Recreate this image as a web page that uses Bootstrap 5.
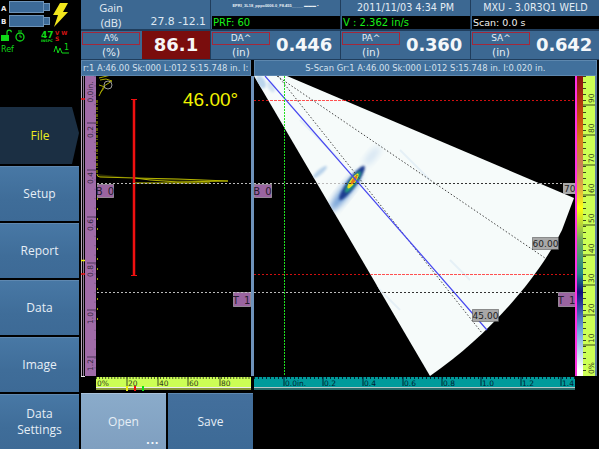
<!DOCTYPE html>
<html lang="en">
<head>
<meta charset="utf-8">
<title>Scan</title>
<link href="https://cdn.jsdelivr.net/npm/bootstrap@5.3.0/dist/css/bootstrap.min.css" rel="stylesheet">
<style>
html,body{width:599px;height:449px;margin:0;overflow:hidden;background:#000;color:#dfe8f2;font-family:"DejaVu Sans",sans-serif}
.shell{width:599px;height:449px}
.side{width:80px;flex:0 0 80px}
.status{height:107px;flex:0 0 107px}
.menu-btn{height:55px;flex:0 0 55px;margin-bottom:2px;background:linear-gradient(#4878a5,#3f6d99 60%,#3d6a96);border-top:1px solid #5f88b0;color:#e6eef6;font:12px/16px "Open Sans",sans-serif;margin-right:1px}
.menu-btn.on{height:57px;flex:0 0 57px;background:#1b2f43;color:#ecec1e;margin-right:0;border:0;clip-path:polygon(0 0,72px 0,79px 26px,72px 57px,0 57px)}
.work{width:519px}
.head{display:grid;grid-template-columns:129px 129px 129px 129px;column-gap:1px;row-gap:2px;grid-template-rows:29px 28px;background:#203d5c;margin-left:1px;height:60px;width:518px}
.cell{background:#3c6892;overflow:hidden;min-width:0}
.gain-l{width:60px;font:11px/15px "Open Sans",sans-serif;color:#e4ecf4}
.num{font:10.800px/15px "DejaVu Sans",sans-serif;color:#dfe8f2}
.top-c{font:9.600px/16px "DejaVu Sans",sans-serif;color:#e4ecf4;white-space:nowrap}
.blk{background:#000;height:13px;margin-left:1px;font:10px/13px "DejaVu Sans",sans-serif;padding-left:1px;text-align:left;white-space:nowrap}
.grn{color:#19ef19}
.wht{color:#f0f0f0;font-size:9.500px}
.fname{height:16px;font:bold 4px/12px "Liberation Sans",sans-serif;color:#e8eef5;white-space:nowrap}
.tag{height:13px;width:58px;margin:1px 0 0 1px;border:1px solid #a3283a;font:9px/11px "DejaVu Sans",sans-serif;color:#e4ecf4;text-align:center}
.unit{font:10.500px/14px "DejaVu Sans",sans-serif;color:#e4ecf4;width:60px;text-align:center}
.big{font:bold 18px/28px "DejaVu Sans",sans-serif;color:#f4f7fa;letter-spacing:-.2px}
.peak{background:#7a0d0d;width:68px;text-align:center;font:bold 18px/27px "DejaVu Sans",sans-serif;color:#f6f6f6}
.titles{height:16px;flex:0 0 16px;margin-left:1px;margin-right:2px}
.tbar{background:#41709c;border:1px solid #5d87ae;font:8.400px/14px "DejaVu Sans",sans-serif;color:#d5e0ec;white-space:nowrap;overflow:hidden;padding-left:1px}
.tbar-a{width:170px}
.tbar-s{width:344px;margin-left:3px;padding-left:0}
.views{height:316px;flex:0 0 316px}
.views svg{display:block}
.bottom-row{height:56px;margin-left:1px;margin-top:1px}
.act{width:85px;margin-right:2px;background:linear-gradient(#436f9c,#3d6a96);border-top:1px solid #5f88b0;color:#e6eef6;font:12px "Open Sans",sans-serif}
.act.lit{background:linear-gradient(#8aabca,#7f9fc0);position:relative;border-top:1px solid #a9c2da}
.dots{position:absolute;right:7px;bottom:2px;font:bold 10px/12px "DejaVu Sans",sans-serif;letter-spacing:.5px;color:#f2f6fa}
text{font-family:"DejaVu Sans",sans-serif}
</style>
</head>
<body>
<div class="shell d-flex">
  <aside class="side d-flex flex-column">
    <div class="status">
      <svg width="80" height="107" viewBox="0 0 80 107">
        <text x="1" y="11" font-size="7" font-weight="bold" fill="#eee">A</text>
        <text x="1" y="24" font-size="7" font-weight="bold" fill="#eee">B</text>
        <g fill="#3c6a98" stroke="#6d93b8" stroke-width="1">
          <rect x="9.500" y="1.500" width="34" height="11"/><rect x="43.500" y="3.500" width="6" height="7"/>
          <rect x="9.500" y="15.500" width="34" height="11"/><rect x="43.500" y="17.500" width="6" height="7"/>
        </g>
        <polygon points="60,3 68,3 63,12 68,12 54,27 58,15 53,15" fill="#f2e61c"/>
        <rect x="1" y="35" width="8" height="6" fill="#10d818"/>
        <path d="M7 35v-2.500a2.200 2.200 0 0 1 4.400-.2" fill="none" stroke="#10d818" stroke-width="1.200"/>
        <circle cx="20" cy="37" r="4" fill="none" stroke="#10d818" stroke-width="1.300"/>
        <path d="M20 34.500V37h2M18 31h4" fill="none" stroke="#10d818"/>
        <text x="41" y="37.500" font-size="9" font-weight="bold" fill="#10d818">47</text>
        <text x="41" y="42" font-size="3.500" font-weight="bold" fill="#10d818">INSPC</text>
        <text x="55" y="35" font-size="5.500" font-weight="bold" fill="#d81414">V W</text>
        <text x="55" y="41" font-size="6" font-weight="bold" fill="#d81414">S</text>
        <text x="1" y="52" font-size="8" fill="#10d818">Ref</text>
        <path d="M54 52l2-6 2 7 2-5 2 5h7" fill="none" stroke="#10d818"/>
        <text x="64" y="50" font-size="8" fill="#10d818">1</text>
      </svg>
    </div>
    <div class="menu-btn on d-flex align-items-center justify-content-center">File</div>
    <div class="menu-btn d-flex align-items-center justify-content-center">Setup</div>
    <div class="menu-btn d-flex align-items-center justify-content-center">Report</div>
    <div class="menu-btn d-flex align-items-center justify-content-center">Data</div>
    <div class="menu-btn d-flex align-items-center justify-content-center">Image</div>
    <div class="menu-btn d-flex flex-column align-items-center justify-content-center"><span>Data</span><span>Settings</span></div>
  </aside>
  <main class="work d-flex flex-column">
    <div class="head">
      <div class="cell d-flex">
        <div class="gain-l text-center"><div>Gain</div><div>(dB)</div></div>
        <div class="num ms-auto me-1 align-self-end">27.8 -12.1</div>
      </div>
      <div class="cell"><div class="fname text-center">EPRI_3L18_pppc0006.0_F8.455_____ ▬▬▬ ▪</div><div class="blk grn">PRF: 60</div></div>
      <div class="cell top-c text-center"><div>2011/11/03 4:34 PM</div><div class="blk grn">V : 2.362 in/s</div></div>
      <div class="cell top-c text-center"><div>MXU - 3.0R3Q1 WELD</div><div class="blk wht">Scan: 0.0 s</div></div>
      <div class="cell d-flex">
        <div><div class="tag">A%</div><div class="unit">(%)</div></div>
        <div class="peak ms-auto">86.1</div>
      </div>
      <div class="cell d-flex">
        <div><div class="tag">DA^</div><div class="unit">(in)</div></div>
        <div class="big ms-auto me-2">0.446</div>
      </div>
      <div class="cell d-flex">
        <div><div class="tag">PA^</div><div class="unit">(in)</div></div>
        <div class="big ms-auto me-2">0.360</div>
      </div>
      <div class="cell d-flex">
        <div><div class="tag">SA^</div><div class="unit">(in)</div></div>
        <div class="big ms-auto me-2">0.642</div>
      </div>
    </div>
    <div class="titles d-flex">
      <div class="tbar tbar-a">r:1 A:46.00 Sk:000 L:012 S:15.748 in. I:</div>
      <div class="tbar tbar-s text-center">S-Scan Gr:1 A:46.00 Sk:000 L:012 S:15.748 in. I:0.020 in.</div>
    </div>
    <div class="views">
      <svg width="519" height="316" viewBox="80 76 519 316">
        <defs>
          <linearGradient id="scale" x1="0" y1="0" x2="0" y2="1">
            <stop offset="0" stop-color="#8a1010"/><stop offset=".14" stop-color="#c8500c"/><stop offset=".22" stop-color="#d8801c"/><stop offset=".3" stop-color="#c9805c"/><stop offset=".38" stop-color="#e0b040"/><stop offset=".44" stop-color="#ffff10"/><stop offset=".55" stop-color="#70a860"/><stop offset=".66" stop-color="#208888"/><stop offset=".72" stop-color="#10107c"/><stop offset=".85" stop-color="#70a8e0"/><stop offset=".98" stop-color="#ffffff"/><stop offset="1" stop-color="#ffffff"/>
          </linearGradient>
          <filter id="b1" x="-50%" y="-50%" width="200%" height="200%"><feGaussianBlur stdDeviation="1.200"/></filter>
          <filter id="b3" x="-50%" y="-50%" width="200%" height="200%"><feGaussianBlur stdDeviation="3"/></filter>
          <clipPath id="sect"><path d="M254 76H287L574 198 562 230C540 275 490 335 430 376Z"/></clipPath>
        </defs>
        <rect x="80" y="76" width="519" height="316" fill="#000"/>
        <!-- A-scan left ruler -->
        <rect x="81" y="76" width="1" height="300" fill="#b8a8bc"/><rect x="83" y="76" width="1" height="300" fill="#8a7a90"/><rect x="85" y="76" width="11" height="300" fill="#a06ca8"/>
        <line x1="95" y1="76" x2="95" y2="376" stroke="#4a3a54" stroke-width="1" stroke-dasharray="1 8.400" opacity=".6"/>
        <path d="M87 123h9M87 170h9M87 217h9M87 263h9M87 310h9M87 357h9" stroke="#4a3458"/>
        <g font-size="7.500" fill="#33283e">
          <text transform="translate(93,92) rotate(-90)" text-anchor="middle">0.0in.</text>
          <text transform="translate(93,132) rotate(-90)" text-anchor="middle">0.2</text>
          <text transform="translate(93,178) rotate(-90)" text-anchor="middle">0.4</text>
          <text transform="translate(93,225) rotate(-90)" text-anchor="middle">0.6</text>
          <text transform="translate(93,271) rotate(-90)" text-anchor="middle">0.8</text>
          <text transform="translate(93,318) rotate(-90)" text-anchor="middle">1.0</text>
          <text transform="translate(93,365) rotate(-90)" text-anchor="middle">1.2</text>
        </g>
        <path d="M81 99h4M81 274h4" stroke="#f01010" stroke-width="1.500"/><path d="M81 260.500h4" stroke="#f0f010" stroke-width="1.500"/>
        <path d="M81 376.500h4" stroke="#eee"/>
        <!-- A-scan trace -->
        <path d="M97 100v74" stroke="#b4b400" fill="none" stroke-width="1" stroke-dasharray="3 1 1 2"/>
        <path d="M97 174q0 3 3 3L135 178 178 179 228 181 178 182 150 180 135 178" fill="#2a2a00" stroke="#b4b400"/>
        <path d="M135 183H210" stroke="#d0d000"/>
        <path d="M97.500 198v130" stroke="#a8a800" stroke-dasharray="2 8"/>
        <path d="M99 78l12-3M100 80l6-1 6 2-8 5-5 10M99 85l6 2-5 6" fill="none" stroke="#a8a800"/>
        <circle cx="108" cy="85" r="4" fill="none" stroke="#999"/>
        <path d="M134 99V276" stroke="#f01010" stroke-width="2.500"/><path d="M131 99.500h6M131 275.500h6" stroke="#f01010"/>
        <text x="183" y="106" font-size="19" fill="#f2f200" style="font-family:'Liberation Sans',sans-serif">46.00°</text>
        <path d="M97 183.500H251M97 292.500H251" stroke="#bbb" stroke-dasharray="2 2"/>
        <rect x="97.500" y="184.500" width="16" height="13" fill="#9a64a0" stroke="#ddd" stroke-dasharray="1 1"/>
        <text x="105.500" y="195" font-size="10" text-anchor="middle" fill="#241a2c" letter-spacing="1">B 0</text>
        <rect x="233.500" y="292.500" width="17" height="14" fill="#9a64a0" stroke="#ddd" stroke-dasharray="1 1"/>
        <text x="242" y="303.500" font-size="10" text-anchor="middle" fill="#241a2c" letter-spacing="1">T 1</text>
        <!-- amplitude ruler -->
        <rect x="96" y="377" width="155" height="10" fill="#ccff55"/>
        <line x1="96" y1="378" x2="251" y2="378" stroke="#4a5a28" stroke-width="2" stroke-dasharray="1 2.050"/>
        <path d="M127 377v9M158 377v9M188 377v9M220 377v9" stroke="#3a4a20"/>
        <g font-size="7.500" fill="#33421c"><text x="97" y="386">0%</text><text x="128" y="386">20</text><text x="159" y="386">40</text><text x="189" y="386">60</text><text x="221" y="386">80</text></g>
        <rect x="96" y="387" width="155" height="1" fill="#eee"/><rect x="96" y="388" width="155" height="2" fill="#8a9a3a"/>
        <rect x="126" y="386" width="2" height="5" fill="#ecec10"/><rect x="134" y="386" width="2" height="5" fill="#f01010"/><rect x="142" y="386" width="2" height="5" fill="#10e010"/>
        <!-- separator -->
        <rect x="251" y="76" width="3" height="300" fill="#6f93bb"/>
        <!-- sector -->
        <path d="M254 76H287L574 198 562 230C540 275 490 335 430 376Z" fill="#f6fbfa"/>
        <g clip-path="url(#sect)">
          <ellipse cx="261" cy="82" rx="4" ry="7" fill="#bcd6ec" filter="url(#b1)" transform="rotate(-30 261 82)"/>
          <ellipse cx="271" cy="87" rx="3" ry="6" fill="#d4e4f2" filter="url(#b1)" transform="rotate(-30 271 87)"/>
          <ellipse cx="320" cy="172" rx="2.500" ry="9" fill="#b8d2ea" filter="url(#b1)" transform="rotate(50 320 172)"/>
          <ellipse cx="372" cy="156" rx="4" ry="12" fill="#d4e4f2" filter="url(#b3)" transform="rotate(40 372 156)"/>
          <ellipse cx="345" cy="192" rx="5" ry="24" fill="#6898d4" filter="url(#b3)" transform="rotate(38 345 192)"/>
          <ellipse cx="352" cy="183" rx="4.500" ry="21" fill="#1c3c90" filter="url(#b1)" transform="rotate(36 352 183)"/>
          <ellipse cx="353" cy="182" rx="3.200" ry="13" fill="#20a080" filter="url(#b1)" transform="rotate(36 353 182)"/>
          <ellipse cx="353" cy="181" rx="2.500" ry="9" fill="#e8e020" transform="rotate(36 353 181)"/>
          <ellipse cx="354" cy="180" rx="1.500" ry="5" fill="#e07820" transform="rotate(36 354 180)"/>
          <path d="M300 120l40 40M400 150l30 30M450 260l20 20M370 280l30 30" stroke="#e6f0f6" stroke-width="2" fill="none"/>
          <path d="M254 100.500H575M254 274.500H575" stroke="#ff5050" stroke-dasharray="3 1"/>
        </g>
        <path d="M254 100.500H270M344 100.500H575M254 274.500H370M535 274.500H575" stroke="#d01010" stroke-dasharray="2 2"/>
        <path d="M277 76L545 258" stroke="#444" stroke-dasharray="1.500 2" fill="none"/>
        <path d="M278 76L482 333" stroke="#444" stroke-dasharray="1.500 2" fill="none"/>
        <path d="M265 76L487 330" stroke="#4646f0" stroke-width="1.200" fill="none"/>
        <path d="M345 183.500H540M384 292.500H520" stroke="#333" stroke-dasharray="2 2"/>
        <path d="M254 183.500H345M540 183.500H563M254 292.500H384M520 292.500H558" stroke="#bbb" stroke-dasharray="2 2"/>
        <path d="M284.500 76V375" stroke="#20e020" stroke-dasharray="2 1"/>
        <rect x="254.500" y="184.500" width="17" height="13" fill="#9a64a0" stroke="#ddd" stroke-dasharray="1 1"/>
        <text x="263" y="195" font-size="10" text-anchor="middle" fill="#241a2c" letter-spacing="1">B 0</text>
        <rect x="558.500" y="292.500" width="17" height="14" fill="#9a64a0" stroke="#ddd" stroke-dasharray="1 1"/>
        <text x="567" y="303.500" font-size="10" text-anchor="middle" fill="#241a2c" letter-spacing="1">T 1</text>
        <rect x="563" y="183" width="13" height="11" fill="#a8a8a8"/>
        <text x="564" y="192" font-size="9" fill="#222">70.</text>
        <rect x="532.500" y="237.500" width="26" height="12" fill="#a8a8a8" stroke="#444" stroke-dasharray="1 1"/>
        <text x="545.500" y="247" font-size="9" text-anchor="middle" fill="#222">60.00</text>
        <rect x="472.500" y="309.500" width="26" height="12" fill="#a8a8a8" stroke="#444" stroke-dasharray="1 1"/>
        <text x="485.500" y="319" font-size="9" text-anchor="middle" fill="#222">45.00</text>
        <!-- colour scale -->
        <rect x="575" y="76" width="2" height="300" fill="#ff30e0"/>
        <rect x="577" y="76" width="6" height="300" fill="url(#scale)"/>
        <rect x="583" y="76" width="12" height="300" fill="#ccff55"/>
        <line x1="584.500" y1="76" x2="584.500" y2="376" stroke="#3a4a20" stroke-width="3" stroke-dasharray="1 5"/>
        <path d="M583 105h12M583 135h12M583 165h12M583 195h12M583 225h12M583 255h12M583 285h12M583 315h12M583 345h12" stroke="#3a4a20"/>
        <g font-size="7.500" fill="#33421c">
          <text transform="translate(594,103) rotate(-90)">90</text><text transform="translate(594,133) rotate(-90)">80</text><text transform="translate(594,163) rotate(-90)">70</text><text transform="translate(594,193) rotate(-90)">60</text><text transform="translate(594,223) rotate(-90)">50</text><text transform="translate(594,253) rotate(-90)">40</text><text transform="translate(594,283) rotate(-90)">30</text><text transform="translate(594,313) rotate(-90)">20</text><text transform="translate(594,343) rotate(-90)">10</text><text transform="translate(594,374) rotate(-90)">0%</text>
        </g>
        <rect x="595" y="76" width="2" height="300" fill="#5d7f9e"/>
        <!-- index ruler -->
        <rect x="254" y="377" width="321" height="10" fill="#009b9b"/>
        <line x1="254" y1="378" x2="575" y2="378" stroke="#023" stroke-width="2" stroke-dasharray="1 3"/>
        <path d="M284 377v9M323 377v9M363 377v9M403 377v9M442 377v9M481 377v9M521 377v9M561 377v9" stroke="#023"/>
        <g font-size="7.500" fill="#023"><text x="285" y="386">0.0in.</text><text x="324" y="386">0.2</text><text x="364" y="386">0.4</text><text x="404" y="386">0.6</text><text x="443" y="386">0.8</text><text x="482" y="386">1.0</text><text x="522" y="386">1.2</text><text x="562" y="386">1.4</text></g>
        <rect x="254" y="387" width="321" height="1" fill="#b8c8c8"/><rect x="254" y="388" width="321" height="2" fill="#2a6a6a"/>
      </svg>
    </div>
    <div class="bottom-row d-flex">
      <div class="act lit d-flex align-items-center justify-content-center">Open<span class="dots">...</span></div>
      <div class="act d-flex align-items-center justify-content-center">Save</div>
    </div>
  </main>
</div>
<script src="https://cdn.jsdelivr.net/npm/bootstrap@5.3.0/dist/js/bootstrap.bundle.min.js"></script>
</body>
</html>
